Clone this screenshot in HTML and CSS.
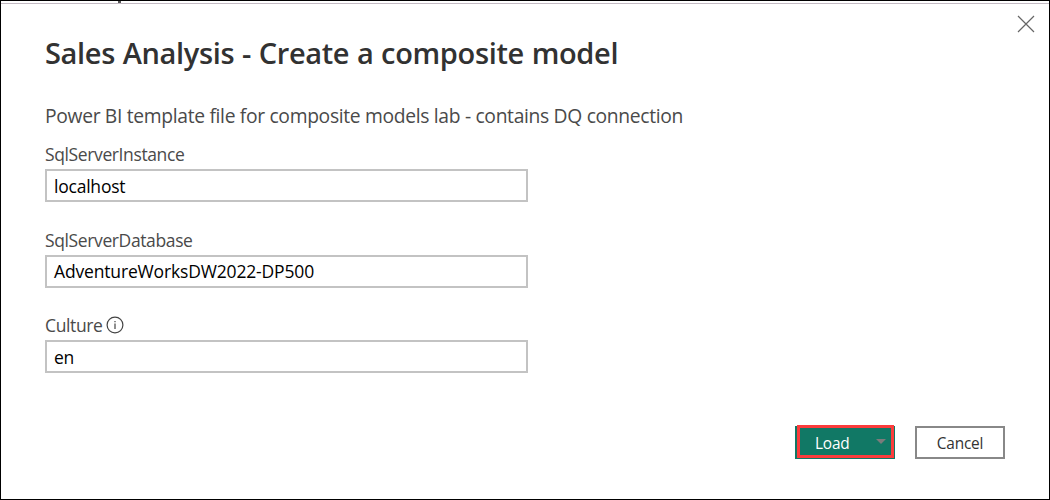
FILE: index.html
```html
<!DOCTYPE html>
<html lang="en">
<head>
<meta charset="utf-8">
<title>Sales Analysis</title>
<link rel="stylesheet" href="styles.css">
</head>
<body>
<main class="window">
  <div class="top-edge"><span class="edge-mark"></span></div>
  <section class="dialog">
    <svg class="close" viewBox="0 0 18 18" width="18" height="18" role="img" aria-label="Close"><path d="M1 1L17 17M17 1L1 17"/></svg>
    <h1 class="title"><span>Sales Analysis - Create a composite model</span></h1>
    <p class="description"><span>Power BI template file for composite models lab - contains DQ connection</span></p>
    <div class="field">
      <label class="label instance"><span>SqlServerInstance</span></label>
      <div class="input host"><span>localhost</span></div>
    </div>
    <div class="field">
      <label class="label database"><span>SqlServerDatabase</span></label>
      <div class="input db-name"><span>AdventureWorksDW2022-DP500</span></div>
    </div>
    <div class="field">
      <label class="label culture"><span>Culture</span>
        <svg class="info" viewBox="0 0 18 18" width="18" height="18"><circle cx="9" cy="9" r="7.9"/><path d="M9 7.5V13M9 5V6.2"/></svg>
      </label>
      <div class="input code"><span>en</span></div>
    </div>
    <div class="actions">
      <div class="button load"><span>Load</span><svg class="caret" viewBox="0 0 10 5" width="10" height="5"><path d="M0 0H10L5 5Z"/></svg></div>
      <div class="button cancel"><span>Cancel</span></div>
    </div>
  </section>
</main>
</body>
</html>
```
FILE: styles.css
```css
*, *::after { box-sizing: border-box; }
body { margin: 0; background: #fff; font-family: "Open Sans", "Noto Sans", sans-serif; color: #4a4a4a; }
.window { width: 1050px; height: 500px; border: 1px solid #000; overflow: hidden; }
.top-edge { height: 3px; border-bottom: 1px solid #c3bac3; }
.edge-mark { display: block; width: 3px; height: 2px; margin-left: 117px; background: #555; }
.dialog { position: relative; padding: 29px 44px 0; }
.close { position: absolute; top: 11px; right: 14px; fill: none; stroke: #666; stroke-width: 1.2; }
.title { margin: 0; height: 40px; line-height: 40px; font-size: 29px; letter-spacing: -0.34px; word-spacing: 0.5px; font-weight: 600; color: #323232; white-space: nowrap; }
.description { margin: 28px 0 4px; height: 30px; line-height: 30px; font-size: 19.3px; letter-spacing: -0.33px; white-space: nowrap; }
.field { height: 85.5px; padding-top: 7px; }
.label { display: flex; align-items: center; gap: 4px; height: 27px; padding-bottom: 3px; line-height: 24px; font-size: 17.5px; letter-spacing: -0.38px; }
.input { width: 483px; height: 33px; border: 2px solid #c3c3c3; padding-left: 7px; line-height: 30px; font-size: 17.5px; letter-spacing: -0.22px; color: #000; }
.db-name { letter-spacing: -0.16px; line-height: 29px; }
.info { fill: none; stroke: #444; stroke-width: 1.2; }
.actions { display: flex; justify-content: flex-end; gap: 20px; margin-top: 34px; }
.button { height: 33px; font-size: 15.4px; letter-spacing: -0.2px; }
.load { position: relative; display: flex; width: 100px; padding-left: 20px; background: #117865; color: #fff; line-height: 35px; }
.load::after { content: ""; position: absolute; left: 2px; top: -1px; width: 97px; height: 33px; border: 3px solid #fc3c3c; }
.caret { margin: 13px 9px 0 auto; fill: #7b7b7b; }
.cancel { width: 90px; border: 2px solid #888; text-align: center; color: #333; line-height: 31px; }
```
